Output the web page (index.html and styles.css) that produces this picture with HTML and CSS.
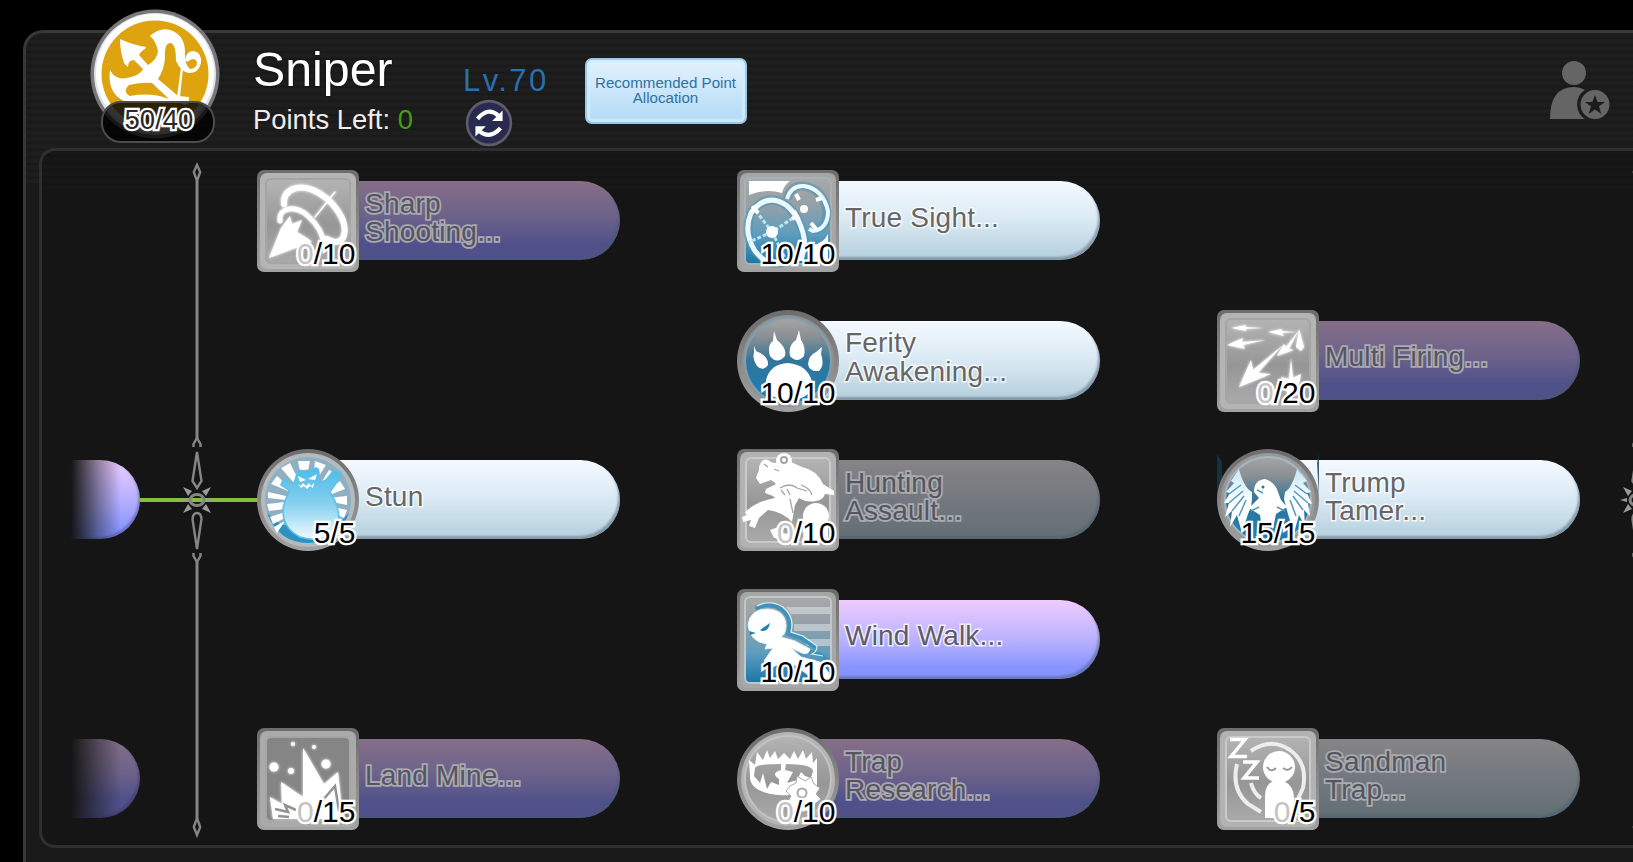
FILE: index.html
```html
<!DOCTYPE html>
<html lang="en">
<head>
<meta charset="utf-8">
<title>Sniper skills</title>
<link rel="stylesheet" href="styles.css">
</head>
<body>
<svg class="defs" width="0" height="0" aria-hidden="true">
  <defs>
    <linearGradient id="gray" x1="0" y1="0" x2="0" y2="1"><stop offset="0" stop-color="#b4b4b4"/><stop offset=".55" stop-color="#969696"/><stop offset="1" stop-color="#aaaaaa"/></linearGradient>
    <linearGradient id="rim" x1="0" y1="0" x2="0" y2="1"><stop offset="0" stop-color="#6c6c6c"/><stop offset="1" stop-color="#a2a2a2"/></linearGradient>
    <linearGradient id="blue" x1="0" y1="0" x2="0" y2="1"><stop offset="0" stop-color="#a9a9aa"/><stop offset=".3" stop-color="#96a0a6"/><stop offset=".65" stop-color="#5f9dbd"/><stop offset="1" stop-color="#1b75a6"/></linearGradient>
    <linearGradient id="deep" x1="0" y1="0" x2="0" y2="1"><stop offset="0" stop-color="#a5a5a5"/><stop offset=".22" stop-color="#8a8f93"/><stop offset=".5" stop-color="#31759b"/><stop offset="1" stop-color="#1b80b4"/></linearGradient>
    <linearGradient id="monster" x1="0" y1="0" x2="0" y2="1"><stop offset="0" stop-color="#4fbbe6"/><stop offset=".5" stop-color="#84d0ee"/><stop offset="1" stop-color="#f2fbff"/></linearGradient>
    <linearGradient id="wing" x1="0" y1="0" x2="0" y2="1"><stop offset="0" stop-color="#c3e6f6"/><stop offset=".5" stop-color="#fff"/></linearGradient>
    <filter id="glow" x="-30%" y="-30%" width="160%" height="160%"><feGaussianBlur stdDeviation="1.8" result="b"/><feMerge><feMergeNode in="b"/><feMergeNode in="SourceGraphic"/></feMerge></filter>
    <symbol id="divider" viewBox="0 0 40 690">
      <g fill="none" stroke="#858585" stroke-width="2.400">
        <path stroke-width="3" d="M20 19V277M20 400V656"/>
        <path d="M20 3L23.200 10 20 19 16.800 10Z M20 656L23.200 665 20 673 16.800 665Z"/>
        <path d="M20 276L16.500 282V285M20 276L23.500 282V285M16.500 391V394L20 400L23.500 394V391"/>
        <path d="M20 290L15.500 319L20 326L24.500 319Z M20 387L15.500 357Q16 351 20 351Q24 351 24.500 357Z"/>
        <ellipse cx="20" cy="338" rx="7" ry="5.500" stroke-width="3"/>
      </g>
      <path fill="#9a9a9a" d="M6 325L15 329 11 334Z M34 325L25 329 29 334Z M6 351L15 347 11 342Z M34 351L25 347 29 342Z M3 338L10 336V340Z M37 338L30 336V340Z"/>
    </symbol>
  </defs>
</svg>

<main class="panel">
  <header class="header">
    <div class="badge">
      <svg class="badge-art" viewBox="0 0 130 130">
        <circle cx="65" cy="65" r="64.500" fill="#777"/>
        <circle cx="65" cy="65" r="61" fill="#dfe3ee"/>
        <circle cx="65" cy="64" r="59" fill="#fff"/>
        <circle cx="65" cy="65" r="53.500" fill="#dea40f"/>
        <g fill="#fff">
          <path d="M30 30Q43 36 56 38L55 40Q52 41 49 46L58 56Q67 51 68 42Q66 32 60 27Q71 17 83 22Q95 28 95 43Q94 55 100 60Q107 60 107 53Q105 48 100 51Q97 54 95 51Q96 42 104 42Q112 44 111 54Q109 64 99 64Q91 63 86 52Q86 34 80 34Q74 35 75 49Q74 61 68 70L88 87 99 88V94Q96 98 90 94L34 92Q17 84 20 61Q26 73 41 68Q51 65 53 60L44 51Q38 51 38 58L34 54Q30 42 30 30Z"/>
          <path d="M91 58L93 59 90 88H87Z"/>
        </g>
        <path d="M62 74Q52 73 39 76Q32 83 40 87Q61 83 79 90Z" fill="#dea40f"/>
      </svg>
      <span class="badge-count">50/40</span>
    </div>
    <div class="title">
      <h1>Sniper</h1>
      <p>Points Left: <b>0</b></p>
    </div>
    <div class="level">
      <span>Lv.70</span>
      <svg class="reset" viewBox="0 0 46 46">
        <circle cx="23" cy="23" r="21" fill="#292a50" stroke="#5d5c68" stroke-width="2.500"/>
        <g fill="none" stroke="#fff" stroke-width="4"><path d="M12 19Q22 7 32 16"/><path d="M34 28Q24 39 14 31"/></g>
        <path fill="#fff" d="M36 11V21H26Z M10 26H20L10 36Z"/>
      </svg>
    </div>
    <button class="recommend">Recommended Point Allocation</button>
    <svg class="profile" viewBox="0 0 60 60">
      <g fill="#656565"><circle cx="24" cy="12" r="12"/><path d="M0 58Q0 26 24 26Q30 26 35 29Q27 34 27 44Q28 54 35 58Z"/>
      <path fill-rule="evenodd" d="M45 29A14.500 14.500 0 1 0 45 58A14.500 14.500 0 1 0 45 29M45 34L47.600 41H55L49 45.600 51.300 53 45 48.500 38.700 53 41 45.600 35 41H42.400Z"/></g>
    </svg>
  </header>

  <section class="board">
    <div class="stubs">
      <i class="stub bright"></i>
      <i class="stub"></i>
    </div>
    <i class="link"></i>
    <svg class="divider"><use href="#divider" width="40" height="690"/></svg>
    <svg class="divider next"><use href="#divider" width="40" height="690"/></svg>

    <div class="tree">
      <article class="node violet off c1 r1">
        <svg class="icon" viewBox="0 0 102 102">
          <rect width="102" height="102" rx="7" fill="url(#rim)"/><rect x="3" y="3" width="96" height="96" rx="7" fill="#b4b4b4"/><rect x="9" y="9" width="84" height="84" rx="5" fill="url(#gray)" stroke="#a5a5a5" stroke-width="2"/>
          <g filter="url(#glow)"><g fill="none" stroke="#fff" stroke-linecap="round"><path stroke-width="6" d="M27 34C26 19 42 14 56 20C77 29 91 52 87 65C85 74 76 73 70 69"/><path stroke-width="5" d="M23 51C21 38 38 34 51 46C60 54 66 64 67 75"/><path stroke-width="1.500" d="M78 22L58 47"/></g><path fill="#fff" d="M12 88L24 58 33 46 35 54 45 50 40 62 50 68 55 72Z"/></g>
        </svg>
        <div class="bar"><span class="label">Sharp<br>Shooting...</span></div><span class="count"><b>0</b>/10</span>
      </article>

      <article class="node sky c2 r1">
        <svg class="icon" viewBox="0 0 102 102">
          <rect width="102" height="102" rx="7" fill="url(#rim)"/><rect x="3" y="3" width="96" height="96" rx="7" fill="#a6a6a6"/><rect x="8" y="8" width="86" height="86" rx="5" fill="url(#blue)" stroke="#a8b1b6" stroke-width="2"/>
          <path fill="none" stroke="#4d93b5" stroke-width="9" d="M50 92Q31 98 18 81Q6 62 14 43Q29 22 49 35Q65 48 68 74L64 90M50 29Q54 15 67 16Q86 19 90 41Q90 59 76 61" opacity=".55"/>
          <path fill="#fff" d="M12 11H53Q47 15 45 23Q29 18 12 25Z M76 75Q87 73 91 64V91H70Z"/>
          <g fill="none" stroke="#eaf8ff" stroke-width="5"><path d="M50 92Q31 98 18 81Q6 62 14 43Q29 22 49 35Q65 48 68 74L64 91"/><path stroke-width="4" d="M50 29Q54 15 67 16Q86 19 91 41Q91 59 76 61L72 59"/></g>
          <g fill="none" stroke="#b4e6f7" stroke-width="3" stroke-dasharray="4 2"><path d="M15 36L35 62 62 44M35 62L12 72M35 62L49 90"/></g>
          <path d="M16 36L21 43M20 36L14 42M57 41L62 50M61 45L55 49M59 24L62 30M79 30L85 28M74 53L79 59" stroke="#fff" stroke-width="4"/>
          <circle cx="35" cy="62" r="6" fill="#fff"/><circle cx="67" cy="39" r="4" fill="#fff"/>
        </svg>
        <div class="bar"><span class="label">True Sight...</span></div><span class="count">10/10</span>
      </article>

      <article class="node sky c2 r2">
        <svg class="icon" viewBox="0 0 102 102">
          <circle cx="51" cy="51" r="51" fill="url(#rim)"/><circle cx="51" cy="51" r="46" fill="#8f9294"/><circle cx="51" cy="51" r="43" fill="url(#deep)" stroke="#849eae" stroke-width="2"/>
          <g fill="#fff"><path d="M17 36L19 41Q32 46 31 55Q26 62 20 56Q15 48 17 43Z M37 21L40 30Q50 38 48 46Q40 55 33 46Q30 35 36 31Z M62 20L64 30Q69 37 67 46Q60 54 53 46Q51 35 59 30Z M85 37L84 44Q88 55 82 61Q72 62 71 54Q72 45 79 42Z"/><path d="M29 70Q33 54 51 53Q71 55 75 72Q77 88 51 91Q27 88 29 70Z"/></g>
        </svg>
        <div class="bar"><span class="label">Ferity<br>Awakening...</span></div><span class="count">10/10</span>
      </article>

      <article class="node violet off c3 r2">
        <svg class="icon" viewBox="0 0 102 102">
          <rect width="102" height="102" rx="7" fill="url(#rim)"/><rect x="3" y="3" width="96" height="96" rx="7" fill="#b4b4b4"/><rect x="9" y="9" width="84" height="84" rx="5" fill="url(#gray)" stroke="#a5a5a5" stroke-width="2"/>
          <g fill="#fff" filter="url(#glow)"><path d="M14 18L29 15 28 17 47 18 28 19 30 21Z M10 35L26 28 25 32 49 30 26 35 28 39Z M51 22L65 19 64 21 80 22 65 23 67 26Z M60 46L67 34 69 37 82 20 72 39 77 40Z M82 19L87 37 84 41 79 37Z M22 77L34 50 36 60 66 35 41 63 54 64Z M74 48L76 68 84 64 80 85H71L64 67 72 69Z"/></g>
        </svg>
        <div class="bar"><span class="label">Multi Firing...</span></div><span class="count"><b>0</b>/20</span>
      </article>

      <article class="node sky c1 r3">
        <svg class="icon" viewBox="0 0 102 102">
          <circle cx="51" cy="51" r="51" fill="url(#rim)"/><circle cx="51" cy="51" r="47" fill="#b4bbbf"/><circle cx="51" cy="51" r="43" fill="#8fb0c2"/><path d="M10 64Q22 94 51 94Q80 94 92 64L80 76H24Z" fill="#2b93c3"/>
          <g fill="#fff"><path d="M41 12H53L50 28H44Z M24 19L33 14 41 30 36 33Z M14 35L20 27 34 39 31 42Z M11 49V43L29 47V51Z M12 62L10 55 28 53V60Z M16 75L13 68 28 63V69Z M58 12L69 16 60 30H56Z M72 21L80 25 68 40 64 34Z M83 32L88 40 70 47 69 42Z M90 47V56L70 52V49Z M90 61L87 69 72 62V57Z M20 84L17 78 28 72Z"/></g>
          <path fill="url(#monster)" stroke="#5dc1ea" stroke-width="1.500" d="M41 21Q50 23 59 19Q63 18 62 34L69 31 76 22 84 23 82 30 73 43Q86 63 80 82Q65 95 43 88Q25 79 26 59Q29 47 33 42L24 36 26 31 37 35Z"/>
          <path fill="#fff" d="M41 27L49 31 43 33ZM60 25L51 30 58 31Z M41 35L44 37 46 34 49 37 52 34 54 37 57 34 56 39 53 37 50 40 47 37 44 39Z"/>
        </svg>
        <div class="bar"><span class="label">Stun</span></div><span class="count">5/5</span>
      </article>

      <article class="node sky off c2 r3">
        <svg class="icon" viewBox="0 0 102 102">
          <rect width="102" height="102" rx="7" fill="url(#rim)"/><rect x="3" y="3" width="96" height="96" rx="7" fill="#b2b2b2"/><rect x="9" y="9" width="84" height="84" rx="5" fill="url(#gray)" stroke="#cacaca" stroke-width="2"/>
          <g fill="#fff">
            <path d="M22 22Q21 13 28 12L38 14 54 13 65 18Q80 21 86 35L97 42V46L88 45Q86 51 79 52Q70 54 62 49L58 56 55 73Q46 63 31 61L22 69 18 79 12 77 14 71 6 73 5 68 10 66 8 63Q20 52 38 49L36 47 28 44 29 40 39 35 34 31 23 35 19 29 21 23Z"/>
            <circle cx="29" cy="16" r="5.500"/><circle cx="47" cy="12" r="8"/><circle cx="79" cy="67" r="13"/>
            <path d="M33 81L49 75 44 84 62 86 53 91 37 89Z M67 73Q81 81 91 70V92H66Z"/>
          </g>
          <g fill="none" stroke="#a5a5a5" stroke-width="2"><circle cx="47" cy="11" r="3"/><path stroke-width="1.300" d="M31 36L37 33M64 36Q73 39 75 46M43 39Q53 33 60 39L70 42M44 41L48 46M50 40L53 46M53 50L56 64M27 15L31 18M37 20L42 22"/></g>
        </svg>
        <div class="bar"><span class="label">Hunting<br>Assault...</span></div><span class="count"><b>0</b>/10</span>
      </article>

      <article class="node sky c3 r3">
        <svg class="icon" viewBox="0 0 102 102">
          <path d="M0 5L5 13V28L0 51Z M100 14L102 4V47Z" fill="#17384a" opacity=".8"/>
          <circle cx="51" cy="51" r="51" fill="url(#rim)"/><circle cx="51" cy="51" r="47" fill="#999"/><circle cx="51" cy="51" r="43" fill="url(#deep)" stroke="#a6b7c1" stroke-width="2"/>
          <path fill="url(#wing)" d="M22 20Q27 39 35 43L35 50 34 58 31 65 25 84 20 66 13 78 15 62 8 68 12 54 7 54 13 44 9 43 17 34 14 32Z M80 20Q75 39 68 43L67 50 69 58 71 65 77 84 82 66 88 77 87 61 93 67 91 54 95 55 90 44 94 43 86 34 90 32Z"/>
          <path fill="#fff" d="M42 49L37 43Q37 31 48 30Q58 33 61 43L64 51 70 58 59 65 56 80 51 74 45 80 43 66 32 59Z"/>
          <path fill="none" stroke="#529ac0" d="M40 41L46 44M12 45L24 36M12 54L26 42M15 62L27 47M22 67L29 51M90 45L78 36M91 54L77 42M86 61L76 47M79 67L73 51M34 62L42 58M68 62L60 58" stroke-width="1.500"/><circle cx="46" cy="38" r="1.500" fill="#2b7399"/>
        </svg>
        <div class="bar"><span class="label">Trump<br>Tamer...</span></div><span class="count">15/15</span>
      </article>

      <article class="node violet c2 r4">
        <svg class="icon" viewBox="0 0 102 102">
          <rect width="102" height="102" rx="7" fill="url(#rim)"/><rect x="3" y="3" width="96" height="96" rx="7" fill="#a6a6a6"/><rect x="8" y="8" width="86" height="86" rx="5" fill="url(#blue)" stroke="#c0c7ca" stroke-width="2"/>
          <path d="M49 18H93V25H54Z M57 35H93V42H57Z M66 50H93V57H70Z" fill="#d3dadd" opacity=".65"/>
          <path fill="none" stroke="#3d93bb" stroke-width="4" stroke-linecap="round" d="M20 19Q32 13 44 20Q56 29 51 45L64 49 78 58M70 62L84 66 92 74"/>
          <path fill="none" stroke="#d9f2fc" stroke-width="1.200" d="M20 17Q33 10 46 18Q58 28 54 43L66 47 80 57Q80 63 75 65L86 67"/>
          <path fill="#fff" stroke="#d9f4ff" d="M11 36Q13 20 31 20Q48 21 49 36Q49 45 44 48L58 52 73 60Q72 66 65 64L54 59 64 68 83 73 92 84V91H77L60 77 47 72 36 78 27 72 36 59 28 60 30 55Q13 53 11 36Z"/>
          <path fill="#2382ac" d="M23 41L33 34Q31 43 25 42Z M12 42L19 44 13 46Z"/>
        </svg>
        <div class="bar"><span class="label">Wind Walk...</span></div><span class="count">10/10</span>
      </article>

      <article class="node violet off c1 r5">
        <svg class="icon" viewBox="0 0 102 102">
          <rect width="102" height="102" rx="7" fill="url(#rim)"/><rect x="3" y="3" width="96" height="96" rx="7" fill="#aaa"/><rect x="9" y="9" width="84" height="84" rx="5" fill="#858585" stroke="#a5a5a5" stroke-width="2"/>
          <g fill="#fff" filter="url(#glow)"><circle cx="17" cy="39" r="4.500"/><circle cx="36" cy="16" r="2"/><circle cx="57" cy="19" r="2"/><circle cx="69" cy="36" r="4.500"/><circle cx="34" cy="43" r="3"/><path d="M13 69L25 76 24 54 46 69V20L67 56 81 44 86 91H16Z"/></g>
          <path fill="none" stroke="#929292" stroke-width="2.500" d="M18 81L31 84 28 77 39 82M65 73L78 58 82 83M21 88L32 89"/>
        </svg>
        <div class="bar"><span class="label">Land Mine...</span></div><span class="count"><b>0</b>/15</span>
      </article>

      <article class="node violet off c2 r5">
        <svg class="icon" viewBox="0 0 102 102">
          <circle cx="51" cy="51" r="51" fill="url(#rim)"/><circle cx="51" cy="51" r="47" fill="#b4b4b4"/><circle cx="51" cy="51" r="43" fill="url(#gray)" stroke="#c2c2c2" stroke-width="2"/>
          <path fill="#fff" fill-rule="evenodd" d="M12 32L18 37 20 24 26 32 30 22 33 30 38 23 41 31 47 25 53 31 57 23 61 31 66 22 69 31 75 24 76 35 80 30V57Q66 69 42 67Q12 64 13 48Z M18 40Q19 36 44 36V42Q33 45 42 51V57L34 54 30 61 26 45 23 55 17 48Z M49 36Q75 36 76 43L74 50 68 48 64 44 60 52 50 55 56 44 48 42Z"/>
          <path fill="#fff" stroke="#a8a8a8" stroke-width="1" d="M60 48L68 53 74 49 77 56 83 60 79 66 84 71 78 76V83H59L49 77 54 68 49 63 53 58 59 55Z"/><circle cx="65" cy="65" r="4.500" fill="#fff" stroke="#aaa" stroke-width="2"/>
        </svg>
        <div class="bar"><span class="label">Trap<br>Research...</span></div><span class="count"><b>0</b>/10</span>
      </article>

      <article class="node sky off c3 r5">
        <svg class="icon" viewBox="0 0 102 102">
          <rect width="102" height="102" rx="7" fill="url(#rim)"/><rect x="3" y="3" width="96" height="96" rx="7" fill="#b2b2b2"/><rect x="9" y="9" width="84" height="84" rx="5" fill="url(#gray)" stroke="#cacaca" stroke-width="2"/>
          <g fill="none" stroke="#fff" stroke-width="4"><path stroke="#ededed" d="M34 23Q54 9 73 22Q91 35 86 60L81 71M20 36Q14 61 31 76L44 84M34 55Q37 66 44 70"/><path stroke-width="3.500" d="M13 11.500H28L14 28.500H30M26 34H40L27 50H42"/></g>
          <g fill="#fff"><circle cx="62" cy="39" r="16"/><path d="M56 53H67Q77 58 77 70V90H48V68Q48 57 56 53Z"/></g><path fill="none" stroke="#999" stroke-width="2" d="M50 39Q54 45 59 40M66 40Q71 44 75 39"/>
        </svg>
        <div class="bar"><span class="label">Sandman<br>Trap...</span></div><span class="count"><b>0</b>/5</span>
      </article>
    </div>
  </section>
</main>
</body>
</html>
```

FILE: styles.css
```css
* { box-sizing: border-box; }

body {
  margin: 0;
  width: 1633px;
  height: 862px;
  overflow: hidden;
  background: #000;
  padding: 30px 0 0 23px;
  font-family: "Liberation Sans", Arial, sans-serif;
}

.defs { display: block; position: absolute; }

.panel {
  width: 1610px;
  height: 832px;
  padding-left: 13px;
  border: 3px solid #383838;
  border-right: 0;
  border-bottom: 0;
  border-radius: 20px 0 0 0;
  background:
    repeating-linear-gradient(to bottom, #1e1e1e 0, #1e1e1e 3px, #181818 5px, #1e1e1e 7px) 0 0 / 100% 150px no-repeat,
    #1a1a1a;
}

.header {
  display: flex;
  align-items: flex-start;
  height: 115px;
  padding-left: 51px;
}

.badge {
  position: relative;
  width: 130px;
  height: 134px;
  margin-top: -24px;
}

.badge-art { display: block; width: 130px; height: 130px; }

/* Count pill lies over the lower edge of the medallion. */
.badge-count {
  position: absolute;
  left: 11px;
  top: 92px;
  width: 114px;
  height: 42px;
  padding-left: 2px;
  border: 2px solid #4c4c4c;
  border-radius: 20px;
  background: rgba(0, 0, 0, .8);
  color: #2a2a2a;
  font-size: 27.500px;
  line-height: 34px;
  text-align: center;
  -webkit-text-stroke: 4.500px #fff;
  paint-order: stroke fill;
}

.title { width: 210px; margin-left: 33px; padding-top: 8px; color: #fff; }
.title h1 { margin: 0; font-size: 48.300px; font-weight: 400; line-height: 56px; text-shadow: 0 0 2px #000; }
.title p { margin: 7px 0 0; font-size: 27.400px; line-height: 32px; color: #ededed; white-space: nowrap; }
.title b { font-weight: 400; color: #469c12; }

.level { width: 122px; padding-top: 31px; color: #286fae; font-size: 31px; line-height: 34px; letter-spacing: 2.400px; }
.level span { display: block; }
.reset { display: block; width: 48px; height: 48px; margin: 1px 0 0 2px; }

.recommend {
  width: 162px;
  height: 66px;
  margin-top: 25px;
  padding: 0 6px 3px 5px;
  border: 2px solid #9cc9e8;
  border-radius: 7px;
  background: linear-gradient(#e3f1fd, #b2dbf7);
  box-shadow: inset 0 0 0 3px rgba(210, 236, 255, .8);
  color: #2f719f;
  font: 15.100px/15px "Liberation Sans", Arial, sans-serif;
}

.profile { width: 60px; height: 60px; margin: 28px 0 0 803px; flex: none; }

.board {
  position: relative;
  width: 1594px;
  height: 700px;
  overflow: hidden;
  border: 3px solid #2f2f2f;
  border-right: 0;
  border-radius: 16px 0 0 16px;
  background: repeating-linear-gradient(to bottom, #171717 0, #171717 3px, #131313 5px, #171717 7px) 0 0 / 100% 40px no-repeat, #151515;
}

.stubs { position: absolute; left: 29px; top: 309px; display: grid; gap: 200px; }
.stub {
  width: 69px;
  height: 79px;
  border-radius: 0 40px 40px 0;
  background: linear-gradient(to right, #151515 0, rgba(21, 21, 21, .4) 28px, rgba(21, 21, 21, 0) 50px), linear-gradient(#846e88, #6b628a 45%, #50518a 75%);
  box-shadow: inset -2px -2px 2px rgba(40, 40, 90, .3);
}
.stub.bright { background: linear-gradient(to right, #151515 0, rgba(21, 21, 21, .4) 28px, rgba(21, 21, 21, 0) 50px), linear-gradient(#edcbff, #b6b0ff 50%, #8693ff 90%); }

.link { position: absolute; left: 98px; top: 347px; width: 118px; height: 4px; background: #83bf3c; }
.divider { position: absolute; left: 135px; top: 11px; width: 40px; height: 680px; }
.divider.next { left: 1575px; width: 16px; }

.tree {
  display: grid;
  grid-template-columns: 480px 480px 363px;
  grid-template-rows: repeat(4, 139.500px) 102px;
  padding: 19px 0 0 215px;
}

.c1 { grid-column: 1; } .c2 { grid-column: 2; } .c3 { grid-column: 3; }
.r1 { grid-row: 1; } .r2 { grid-row: 2; } .r3 { grid-row: 3; } .r4 { grid-row: 4; } .r5 { grid-row: 5; }

.node { position: relative; display: flex; width: 363px; height: 102px; }
.icon { position: relative; z-index: 1; display: block; width: 102px; height: 102px; flex: none; }

.bar {
  display: flex;
  align-items: center;
  width: 313px;
  height: 79px;
  margin: 11px 0 0 -52px;
  padding: 0 0 5px 58px;
  border-radius: 0 40px 40px 0;
  box-shadow: inset -2px -3px 2px rgba(70, 90, 110, .45);
}
.sky .bar { background: linear-gradient(#f4f9ff, #dcebf5 45%, #b4cfdc); }
.violet .bar { background: linear-gradient(#efcbff, #bab2ff 50%, #8794ff 85%); }
.sky.off .bar { background: linear-gradient(#868486, #71777e 55%, #626f74); }
.violet.off .bar { background: linear-gradient(#866e88, #6c628a 45%, #50518a 80%); }

.label {
  color: #666;
  font-size: 28px;
  letter-spacing: .2px;
  line-height: 28.500px;
  white-space: nowrap;
  -webkit-text-stroke: 3px rgba(255, 255, 255, .75);
  paint-order: stroke fill;
}
.violet .label { color: #5f5b68; }
.off .label {
  color: #55555f;
  -webkit-text-stroke: 3.600px #aaa9b2;
}
.sky.off .label { -webkit-text-stroke-color: #a9acb0; }

/* Rank counter lies over the lower right of the icon. */
.count {
  position: absolute;
  right: 264.500px;
  top: 66.500px;
  z-index: 2;
  color: #000;
  font-size: 30px;
  line-height: 34px;
  -webkit-text-stroke: 4.500px #fff;
  paint-order: stroke fill;
}
.count b { font-weight: 400; color: #c4c4c4; }
```
